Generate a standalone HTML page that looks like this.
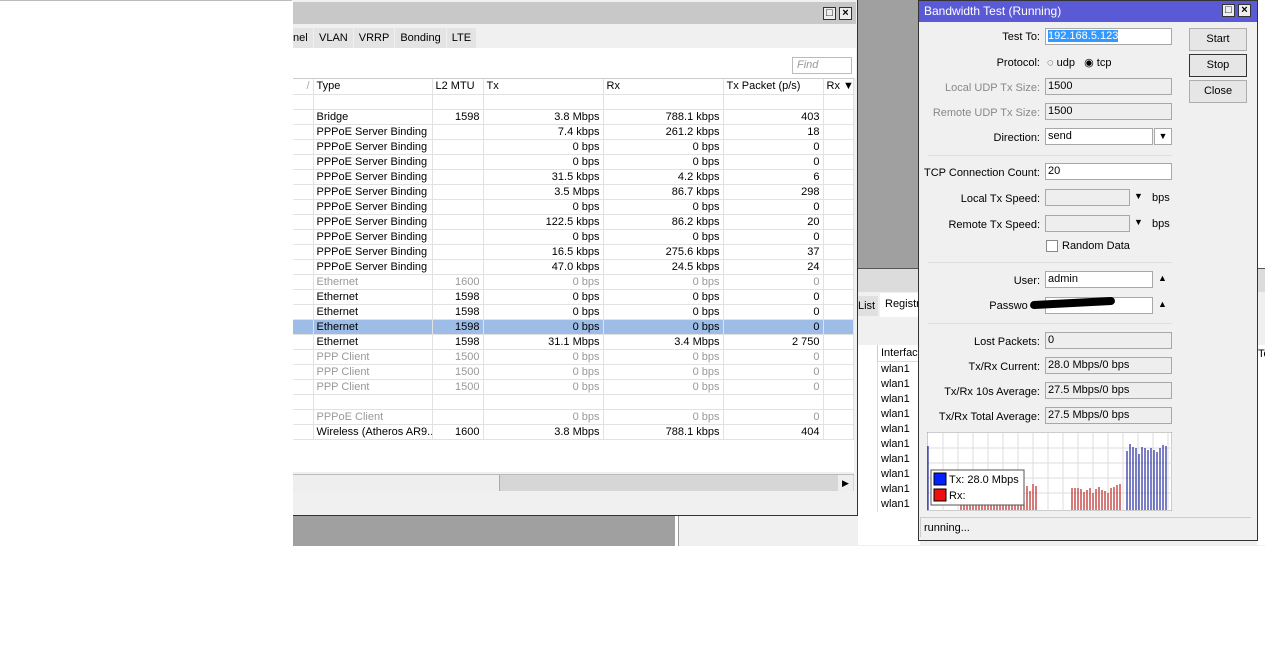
<!DOCTYPE html>
<html><head><meta charset="utf-8"><style>
*{box-sizing:border-box;margin:0;padding:0}
body{width:1265px;height:648px;background:#fff;position:relative;overflow:hidden;font-family:"Liberation Sans",sans-serif;font-size:11px;color:#000}
.a{position:absolute}
table{border-collapse:collapse;table-layout:fixed}
td{height:15px;line-height:14px;padding:0 3px;border-right:1px solid #e2e2e2;border-bottom:1px solid #e2e2e2;white-space:nowrap;overflow:hidden}
td.r{text-align:right}
tr.g td{color:#999}
tr.s td{background:#9dbde6}
.inp{position:absolute;height:17px;border:1px solid #a8a8a8;background:#fff;padding:1px 2px;line-height:13px;font-size:11px}
.inp.d{background:#eee}
.lab{position:absolute;text-align:right;width:200px;line-height:14px}
.lab.g{color:#888}
.btn{position:absolute;left:1189px;width:58px;height:23px;border:1px solid #adadad;background:#e6e6e6;text-align:center;line-height:21px}
.wx{position:absolute;width:13px;height:13px;border:1px solid #333;background:#eee;font-size:11px;line-height:10px;text-align:center;font-weight:bold}
</style></head><body>
<div class="a" style="left:0;top:0;width:292px;height:1px;background:#bbb"></div>
<div class="a" style="left:293px;top:0;width:382px;height:546px;background:#a0a0a0"></div>
<div class="a" style="left:858px;top:0;width:62px;height:268px;background:#a0a0a0"></div>
<div class="a" style="left:678px;top:268px;width:587px;height:278px;background:#f0f0f0;border-left:1px solid #999;border-top:1px solid #555"></div>
<div class="a" style="left:679px;top:269px;width:586px;height:23px;background:#dcdcdc"></div>
<div class="a" style="left:858px;top:296px;width:20px;height:20px;background:#e0e0e0;line-height:20px">List</div>
<div class="a" style="left:880px;top:293px;width:40px;height:24px;background:#fff;line-height:22px;padding-left:5px">Registr</div>
<div class="a" style="left:858px;top:345px;width:62px;height:200px;background:#fff"></div>
<div class="a" style="left:877px;top:345px;width:43px;height:17px;border-left:1px solid #ccc;border-bottom:1px solid #ddd;line-height:17px;padding-left:3px;background:#fff">Interface</div>
<div class="a" style="left:877px;top:362px;width:43px;line-height:15px;padding-left:3px;border-left:1px solid #ddd">wlan1<br>wlan1<br>wlan1<br>wlan1<br>wlan1<br>wlan1<br>wlan1<br>wlan1<br>wlan1<br>wlan1</div>
<div class="a" style="left:1257px;top:345px;width:8px;height:200px;background:#fff"></div>
<div class="a" style="left:1258px;top:348px;font-size:11px">To</div>

<div class="a" style="left:293px;top:0;width:565px;height:516px;background:#f0f0f0;border:1px solid #333;border-left:none;border-top:none"></div>
<div class="a" style="left:293px;top:2px;width:563px;height:22px;background:#c8c8c8"></div>
<div class="wx" style="left:823px;top:7px">□</div>
<div class="wx" style="left:839px;top:7px">×</div>
<div class="a" style="left:293px;top:28px;height:20px;display:flex">
<div style="width:20px;line-height:20px;background:#e4e4e4">nel</div>
<div style="margin-left:1px;padding:0 5px;line-height:20px;background:#e4e4e4">VLAN</div>
<div style="margin-left:1px;padding:0 5px;line-height:20px;background:#e4e4e4">VRRP</div>
<div style="margin-left:1px;padding:0 5px;line-height:20px;background:#e4e4e4">Bonding</div>
<div style="margin-left:1px;padding:0 5px;line-height:20px;background:#e4e4e4">LTE</div>
</div>
<div class="a" style="left:293px;top:48px;width:563px;height:30px;background:#fff"></div>
<div class="a" style="left:792px;top:57px;width:60px;height:17px;border:1px solid #bbb;color:#999;font-style:italic;padding-left:4px;line-height:15px">Find</div>
<div class="a" style="left:293px;top:78px;width:561px;height:394px;background:#fff;border-top:1px solid #ccc"></div>
<table class="a" style="left:293px;top:79px;width:560px">
<colgroup><col style="width:20px"><col style="width:119px"><col style="width:51px"><col style="width:120px"><col style="width:120px"><col style="width:100px"><col style="width:30px"></colgroup>
<tr style="background:#fff"><td class="r" style="color:#aaa">/</td><td>Type</td><td>L2 MTU</td><td>Tx</td><td>Rx</td><td>Tx Packet (p/s)</td><td>Rx ▼</td></tr>
<tr><td></td><td></td><td></td><td></td><td></td><td></td><td></td></tr>
<tr><td></td><td>Bridge</td><td class="r">1598</td><td class="r">3.8 Mbps</td><td class="r">788.1 kbps</td><td class="r">403</td><td></td></tr>
<tr><td></td><td>PPPoE Server Binding</td><td></td><td class="r">7.4 kbps</td><td class="r">261.2 kbps</td><td class="r">18</td><td></td></tr>
<tr><td></td><td>PPPoE Server Binding</td><td></td><td class="r">0 bps</td><td class="r">0 bps</td><td class="r">0</td><td></td></tr>
<tr><td></td><td>PPPoE Server Binding</td><td></td><td class="r">0 bps</td><td class="r">0 bps</td><td class="r">0</td><td></td></tr>
<tr><td></td><td>PPPoE Server Binding</td><td></td><td class="r">31.5 kbps</td><td class="r">4.2 kbps</td><td class="r">6</td><td></td></tr>
<tr><td></td><td>PPPoE Server Binding</td><td></td><td class="r">3.5 Mbps</td><td class="r">86.7 kbps</td><td class="r">298</td><td></td></tr>
<tr><td></td><td>PPPoE Server Binding</td><td></td><td class="r">0 bps</td><td class="r">0 bps</td><td class="r">0</td><td></td></tr>
<tr><td></td><td>PPPoE Server Binding</td><td></td><td class="r">122.5 kbps</td><td class="r">86.2 kbps</td><td class="r">20</td><td></td></tr>
<tr><td></td><td>PPPoE Server Binding</td><td></td><td class="r">0 bps</td><td class="r">0 bps</td><td class="r">0</td><td></td></tr>
<tr><td></td><td>PPPoE Server Binding</td><td></td><td class="r">16.5 kbps</td><td class="r">275.6 kbps</td><td class="r">37</td><td></td></tr>
<tr><td></td><td>PPPoE Server Binding</td><td></td><td class="r">47.0 kbps</td><td class="r">24.5 kbps</td><td class="r">24</td><td></td></tr>
<tr class="g"><td></td><td>Ethernet</td><td class="r">1600</td><td class="r">0 bps</td><td class="r">0 bps</td><td class="r">0</td><td></td></tr>
<tr><td></td><td>Ethernet</td><td class="r">1598</td><td class="r">0 bps</td><td class="r">0 bps</td><td class="r">0</td><td></td></tr>
<tr><td></td><td>Ethernet</td><td class="r">1598</td><td class="r">0 bps</td><td class="r">0 bps</td><td class="r">0</td><td></td></tr>
<tr class="s"><td></td><td>Ethernet</td><td class="r">1598</td><td class="r">0 bps</td><td class="r">0 bps</td><td class="r">0</td><td></td></tr>
<tr><td></td><td>Ethernet</td><td class="r">1598</td><td class="r">31.1 Mbps</td><td class="r">3.4 Mbps</td><td class="r">2 750</td><td></td></tr>
<tr class="g"><td></td><td>PPP Client</td><td class="r">1500</td><td class="r">0 bps</td><td class="r">0 bps</td><td class="r">0</td><td></td></tr>
<tr class="g"><td></td><td>PPP Client</td><td class="r">1500</td><td class="r">0 bps</td><td class="r">0 bps</td><td class="r">0</td><td></td></tr>
<tr class="g"><td></td><td>PPP Client</td><td class="r">1500</td><td class="r">0 bps</td><td class="r">0 bps</td><td class="r">0</td><td></td></tr>
<tr><td></td><td></td><td></td><td></td><td></td><td></td><td></td></tr>
<tr class="g"><td></td><td>PPPoE Client</td><td></td><td class="r">0 bps</td><td class="r">0 bps</td><td class="r">0</td><td></td></tr>
<tr><td></td><td>Wireless (Atheros AR9...</td><td class="r">1600</td><td class="r">3.8 Mbps</td><td class="r">788.1 kbps</td><td class="r">404</td><td></td></tr>
</table>
<div class="a" style="left:293px;top:474px;width:561px;height:17px;background:#d6d6d6;border-top:1px solid #bbb"></div>
<div class="a" style="left:293px;top:475px;width:207px;height:16px;background:#eee;border-right:1px solid #aaa"></div>
<div class="a" style="left:838px;top:475px;width:15px;height:16px;background:#eee;font-size:9px;line-height:16px;text-align:center">▶</div>

<div class="a" style="left:918px;top:0;width:340px;height:541px;background:#f0f0f0;border:1px solid #333"></div>
<div class="a" style="left:919px;top:1px;width:338px;height:21px;background:#5a5ad6;color:#fff;line-height:21px;padding-left:5px;font-size:12px">Bandwidth Test (Running)</div>
<div class="wx" style="left:1222px;top:4px">□</div>
<div class="wx" style="left:1238px;top:4px">×</div>
<div class="lab" style="left:840px;top:30px">Test To:</div>
<div class="inp" style="left:1045px;top:28px;width:127px"><span style="background:#3399ff;color:#fff">192.168.5.123</span></div>
<div class="lab" style="left:840px;top:56px">Protocol:</div>
<div class="a" style="left:1047px;top:56px">◌ udp &nbsp;&nbsp;◉ tcp</div>
<div class="lab g" style="left:840px;top:81px">Local UDP Tx Size:</div>
<div class="inp d" style="left:1045px;top:78px;width:127px">1500</div>
<div class="lab g" style="left:840px;top:106px">Remote UDP Tx Size:</div>
<div class="inp d" style="left:1045px;top:103px;width:127px">1500</div>
<div class="lab" style="left:840px;top:131px">Direction:</div>
<div class="inp" style="left:1045px;top:128px;width:108px">send</div>
<div class="inp" style="left:1154px;top:128px;width:18px;text-align:center;font-size:9px">▼</div>
<div class="a" style="left:928px;top:155px;width:244px;height:1px;background:#ddd"></div>
<div class="lab" style="left:840px;top:166px">TCP Connection Count:</div>
<div class="inp" style="left:1045px;top:163px;width:127px">20</div>
<div class="lab" style="left:840px;top:192px">Local Tx Speed:</div>
<div class="inp d" style="left:1045px;top:189px;width:85px"></div>
<div class="a" style="left:1134px;top:191px;font-size:9px">▼</div><div class="a" style="left:1152px;top:192px">bps</div>
<div class="lab" style="left:840px;top:218px">Remote Tx Speed:</div>
<div class="inp d" style="left:1045px;top:215px;width:85px"></div>
<div class="a" style="left:1134px;top:217px;font-size:9px">▼</div><div class="a" style="left:1152px;top:218px">bps</div>
<div class="a" style="left:1046px;top:240px;width:12px;height:12px;border:1px solid #888;background:#fff"></div>
<div class="a" style="left:1062px;top:240px">Random Data</div>
<div class="a" style="left:928px;top:262px;width:244px;height:1px;background:#ddd"></div>
<div class="lab" style="left:840px;top:274px">User:</div>
<div class="inp" style="left:1045px;top:271px;width:108px">admin</div>
<div class="a" style="left:1158px;top:273px;font-size:9px">▲</div>
<div class="lab" style="left:840px;top:299px">Passwo&nbsp;&nbsp;&nbsp;&nbsp;</div>
<div class="inp" style="left:1045px;top:297px;width:108px"></div>
<div class="a" style="left:1030px;top:299px;width:85px;height:8px;background:#000;border-radius:4px;transform:rotate(-3deg)"></div>
<div class="a" style="left:1158px;top:299px;font-size:9px">▲</div>
<div class="a" style="left:928px;top:323px;width:244px;height:1px;background:#ddd"></div>
<div class="lab" style="left:840px;top:335px">Lost Packets:</div>
<div class="inp d" style="left:1045px;top:332px;width:127px">0</div>
<div class="lab" style="left:840px;top:360px">Tx/Rx Current:</div>
<div class="inp d" style="left:1045px;top:357px;width:127px">28.0 Mbps/0 bps</div>
<div class="lab" style="left:840px;top:385px">Tx/Rx 10s Average:</div>
<div class="inp d" style="left:1045px;top:382px;width:127px">27.5 Mbps/0 bps</div>
<div class="lab" style="left:840px;top:410px">Tx/Rx Total Average:</div>
<div class="inp d" style="left:1045px;top:407px;width:127px">27.5 Mbps/0 bps</div>
<div class="btn" style="top:28px">Start</div>
<div class="btn" style="top:54px;border-color:#333">Stop</div>
<div class="btn" style="top:80px">Close</div>
<svg class="a" style="left:927px;top:432px" width="245" height="79">
<rect x="0" y="0" width="245" height="79" fill="#fff" stroke="#999"/>
<g stroke="#ddd"><path d="M16 1V79M31 1V79M46 1V79M61 1V79M76 1V79M91 1V79M106 1V79M121 1V79M136 1V79M151 1V79M166 1V79M181 1V79M196 1V79M211 1V79M226 1V79M241 1V79M1 16H245M1 31H245M1 46H245M1 61H245"/></g>
<g stroke="#b22" stroke-width="1.2"><path d="M34 78V70M37 78V70M40 78V70M43 78V70M46 78V70M49 78V70M52 78V70M55 78V70M58 78V70M61 78V70M64 78V70M67 78V70M70 78V70M73 78V70M76 78V70M79 78V70M82 78V70M85 78V70M88 78V70M91 78V70M94 78V70M97 78V70M100 78V54M103 78V59M106 78V52M109 78V54M145 78V56M148 78V56M151 78V56M154 78V57M157 78V60M160 78V58M163 78V56M166 78V61M169 78V57M172 78V55M175 78V58M178 78V59M181 78V61M184 78V56M187 78V55M190 78V53M193 78V52"/></g>
<g stroke="#2228a0" stroke-width="1.2"><path d="M1 78V14M200 78V19M203 78V12M206 78V15M209 78V16M212 78V22M215 78V15M218 78V16M221 78V18M224 78V16M227 78V18M230 78V20M233 78V16M236 78V13M239 78V14"/></g>
<rect x="4" y="38" width="93" height="35" fill="#fff" stroke="#555"/>
<rect x="7" y="41" width="12" height="12" fill="#0020ff" stroke="#000"/>
<rect x="7" y="57" width="12" height="12" fill="#ee1010" stroke="#000"/>
<text x="22" y="51" font-family="Liberation Sans" font-size="11">Tx:  28.0 Mbps</text>
<text x="22" y="67" font-family="Liberation Sans" font-size="11">Rx:</text>
</svg>
<div class="a" style="left:920px;top:517px;width:331px;height:20px;border:1px solid #ccc;border-right:none;border-bottom:none;line-height:20px;padding-left:3px">running...</div>
</body></html>
